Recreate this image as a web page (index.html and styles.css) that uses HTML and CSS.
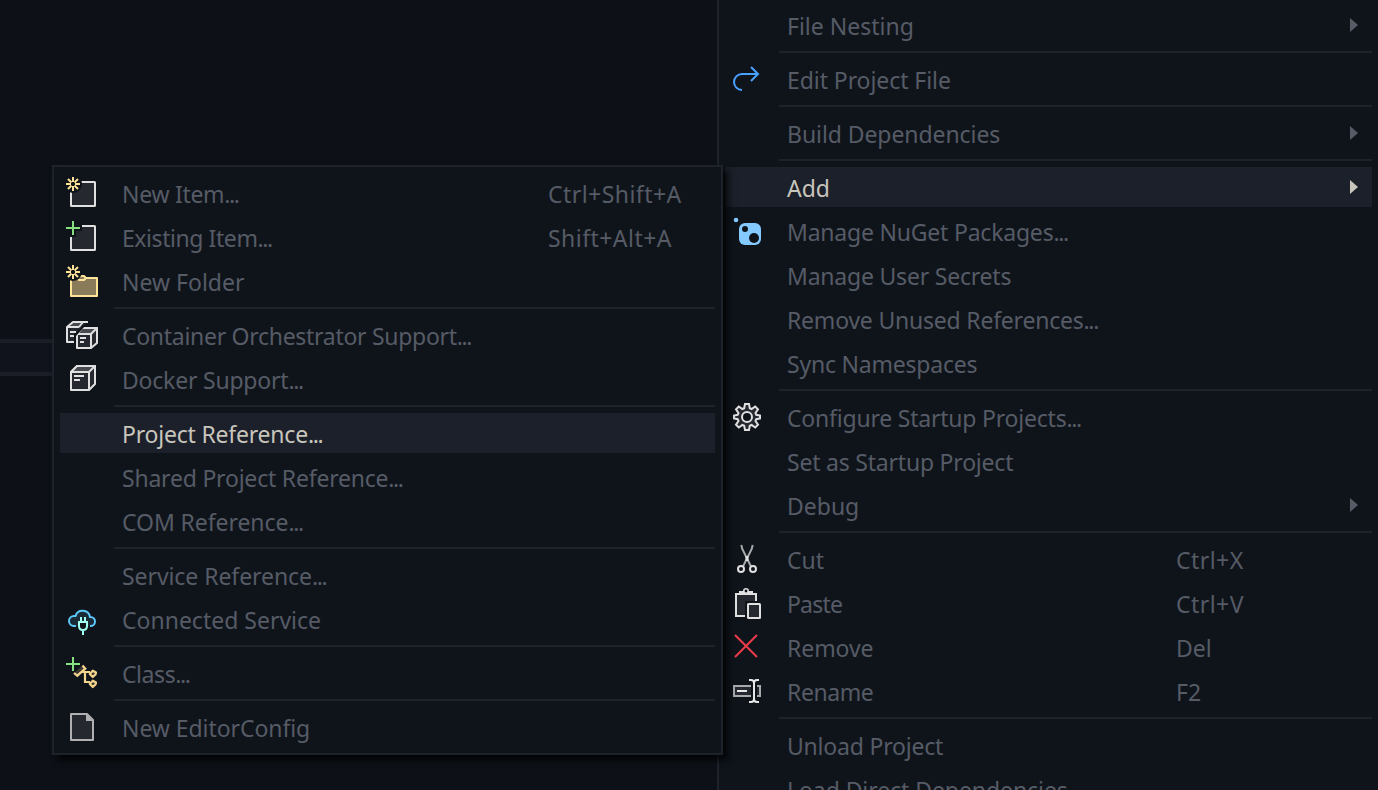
FILE: index.html
```
<!DOCTYPE html>
<html lang="en">
<head>
<meta charset="utf-8">
<title>Project menu</title>
<link rel="stylesheet" href="styles.css">
</head>
<body>
<div class="desktop">
  <div class="backdrop"><div class="strip"></div></div>

  <nav class="menu context">
    <div class="row"><span class="icon"></span><span class="label">File Nesting</span><span class="arrow"></span></div>
    <hr class="sep">
    <div class="row"><svg class="icon" viewBox="0 0 32 32"><path d="M20 4l7 7-7 7M27 11H11a8 8 0 0 0 0 16" fill="none" stroke="#4aa0ff" stroke-width="2"/></svg><span class="label t1">Edit Project File</span></div>
    <hr class="sep">
    <div class="row"><span class="icon"></span><span class="label t1">Build Dependencies</span><span class="arrow"></span></div>
    <hr class="sep">
    <div class="row active"><span class="icon"></span><span class="label">Add</span><span class="arrow"></span></div>
    <div class="row"><svg class="icon" viewBox="0 0 32 32"><circle cx="5" cy="5" r="2.3" fill="#84c9ff"/><rect x="8" y="8" width="22" height="22" rx="6" fill="#84c9ff"/><circle cx="14" cy="14" r="3" fill="#0f141b"/><circle cx="23" cy="23" r="5" fill="#0f141b"/></svg><span class="label t2">Manage NuGet Packages<i>...</i></span></div>
    <div class="row"><span class="icon"></span><span class="label t2">Manage User Secrets</span></div>
    <div class="row"><span class="icon"></span><span class="label t2">Remove Unused References<i>...</i></span></div>
    <div class="row"><span class="icon"></span><span class="label t2">Sync Namespaces</span></div>
    <hr class="sep">
    <div class="row"><svg class="icon" viewBox="0 0 32 32"><path d="M14 3h4l.8 4.200 1.800.8 3.600-2.500 2.800 2.800L24.500 12l.8 1.800 3.700.7v3l-3.700.7-.8 1.800 2.500 3.700-2.800 2.800-3.600-2.500-1.800.8L18 29h-4l-.8-4.200-1.800-.8-3.600 2.500L5 23.700 7.500 20l-.8-1.800L3 17.500v-3l3.700-.7.8-1.800L5 8.300l2.800-2.800L11.400 8l1.800-.8z" fill="#25282f" stroke="#e0e0e0" stroke-width="2"/><circle cx="16" cy="16" r="5" fill="#0f141b" stroke="#e0e0e0" stroke-width="2"/></svg><span class="label t2">Configure Startup Projects<i>...</i></span></div>
    <div class="row"><span class="icon"></span><span class="label t2">Set as Startup Project</span></div>
    <div class="row"><span class="icon"></span><span class="label">Debug</span><span class="arrow"></span></div>
    <hr class="sep">
    <div class="row"><svg class="icon" viewBox="0 0 32 32"><g fill="none" stroke-width="2"><path d="M10.300 2l1 4 8.700 17.500M21.700 2l-1 4L12 23.500" stroke="#a9aaac"/><path d="M16 13v5" stroke="#e0e0e0" stroke-width="3"/><circle cx="10" cy="26" r="3" stroke="#e0e0e0"/><circle cx="22" cy="26" r="3" stroke="#e0e0e0"/></g></svg><span class="label">Cut</span><span class="key">Ctrl+X</span></div>
    <div class="row"><svg class="icon" viewBox="0 0 32 32"><path d="M14 29H5V7h20v7" fill="#25282f"/><path d="M14 29H5V7h20v7" fill="none" stroke="#e0e0e0" stroke-width="2"/><path d="M15 32V15h16" fill="none" stroke="#0f141b" stroke-width="2"/><path d="M8 7V4h4a3 3 0 0 1 6 0h4v3z" fill="#e0e0e0"/><circle cx="15" cy="4" r="1.400" fill="#0f141b"/><rect x="17" y="17" width="12" height="14" rx=".5" fill="#25282f" stroke="#e0e0e0" stroke-width="2"/></svg><span class="label t8">Paste</span><span class="key">Ctrl+V</span></div>
    <div class="row"><svg class="icon" viewBox="0 0 32 32"><path d="M4 4l22 22M26 4L4 26" stroke="#f23c4c" stroke-width="1.900"/></svg><span class="label t1">Remove</span><span class="key plain">Del</span></div>
    <div class="row"><svg class="icon" viewBox="0 0 32 32"><path d="M20 11H3v10h17M26 11h3v10h-3" fill="#25282f" stroke="#a9aaac" stroke-width="2"/><path d="M6 16h10M23 6v20M18 5h2q3 0 3 3 0-3 3-3h2M18 27h2q3 0 3-3 0 3 3 3h2" fill="none" stroke="#e8e8e8" stroke-width="2"/></svg><span class="label t4">Rename</span><span class="key plain">F2</span></div>
    <hr class="sep">
    <div class="row"><span class="icon"></span><span class="label t2">Unload Project</span></div>
    <div class="row"><span class="icon"></span><span class="label t1">Load Direct Dependencies</span></div>
  </nav>

  <nav class="menu submenu">
    <div class="row"><svg class="icon" viewBox="0 0 32 32"><rect x="5" y="5" width="24" height="24" rx=".5" fill="#25282f" stroke="#e0e0e0" stroke-width="2"/><circle cx="7" cy="7" r="9" fill="#0f141b"/><path d="M7 0v5M7 9v5M0 7h5M9 7h5M2 2l3.500 3.500M8.500 8.500l3.500 3.500M12 2L8.500 5.500M5.500 8.500L2 12" stroke="#ffe399" stroke-width="2"/></svg><span class="label t3">New Item<i>...</i></span><span class="key">Ctrl+Shift+A</span></div>
    <div class="row"><svg class="icon" viewBox="0 0 32 32"><rect x="5" y="5" width="24" height="24" rx=".5" fill="#25282f" stroke="#e0e0e0" stroke-width="2"/><path d="M7 0v16M0 7h16" stroke="#0f141b" stroke-width="6"/><path d="M7 0v14M0 7h14" stroke="#85e07f" stroke-width="2"/></svg><span class="label t4">Existing Item<i>...</i></span><span class="key">Shift+Alt+A</span></div>
    <div class="row"><svg class="icon" viewBox="0 0 32 32"><path d="M5 13h7l2-2h4l2 2h11v18H5z" fill="#8a7c5a" stroke="#ffe399" stroke-width="2" stroke-linejoin="round"/><path d="M12 15h6l2-2" fill="none" stroke="#ffe399" stroke-width="2"/><circle cx="7" cy="7" r="9" fill="#0f141b"/><path d="M7 0v5M7 9v5M0 7h5M9 7h5M2 2l3.500 3.500M8.500 8.500l3.500 3.500M12 2L8.500 5.500M5.500 8.500L2 12" stroke="#ffe399" stroke-width="2"/></svg><span class="label">New Folder</span></div>
    <hr class="sep">
    <div class="row"><svg class="icon" viewBox="0 0 32 32"><g fill="#25282f" stroke="#e0e0e0" stroke-width="2" stroke-linejoin="round"><path d="M22 3H7L1 8v15h7V15l3-3 4-4z" stroke="none"/><path d="M7 3h9l-4 5H1z" fill="#484a50" stroke="none"/><path d="M22 3H7L1 8v15h7M1 8h12M13 8l4-5M4 13h6M4 17h4" fill="none"/><path d="M11 15l5-6h15v15l-6 5H11z"/><path d="M11 15l5-6h15l-6 6z" fill="#484a50"/><path d="M25 15v14M14 19h6M14 23h4"/></g><path d="M8.500 17l9-10" stroke="#0f141b" stroke-width="2.200"/></svg><span class="label t3">Container Orchestrator Support<i>...</i></span></div>
    <div class="row"><svg class="icon" viewBox="0 0 32 32"><g fill="#25282f" stroke="#e0e0e0" stroke-width="2" stroke-linejoin="round"><path d="M5 9l6-6h18v18l-6 6H5z"/><path d="M5 9l6-6h18l-6 6z" fill="#484a50"/><path d="M23 9v18M8 13h10M8 17h6"/></g></svg><span class="label t2">Docker Support<i>...</i></span></div>
    <hr class="sep">
    <div class="row active"><span class="icon"></span><span class="label t2">Project Reference<i>...</i></span></div>
    <div class="row"><span class="icon"></span><span class="label t2">Shared Project Reference<i>...</i></span></div>
    <div class="row"><span class="icon"></span><span class="label t1">COM Reference<i>...</i></span></div>
    <hr class="sep">
    <div class="row"><span class="icon"></span><span class="label t1">Service Reference<i>...</i></span></div>
    <div class="row"><svg class="icon" viewBox="0 0 32 32"><path d="M10 23H8a5 5 0 0 1 0-10h1.500a7.500 7.500 0 0 1 14.500 1h.5a4.500 4.500 0 0 1 0 9H24" fill="#1a2a36" stroke="#5cc8fa" stroke-width="2"/><path d="M13 19h8v4q0 4-4 4t-4-4zM12 19h10M15 14v5M19 14v5M17 27v5" fill="#0f141b" stroke="#a0fff0" stroke-width="2"/></svg><span class="label">Connected Service</span></div>
    <hr class="sep">
    <div class="row"><svg class="icon" viewBox="0 0 32 32"><path d="M8.500 15.500l8-7 3 3.500-8 7z" fill="#3c3830"/><path d="M8 16l3.300 2.700 8-7-2.800-3.200M15 15h9M19 15v10h5" fill="none" stroke="#f3d48c" stroke-width="2.200"/><path d="M23.800 17l3-3.300 3.200 1.800-.5 2-2.700 2.500zM23.800 27l3-3.300 3.200 1.800-.5 2-2.700 2.500z" fill="#3c3830" stroke="#f3d48c" stroke-width="2.200" stroke-linejoin="round"/><path d="M7 0v14M0 7h14" stroke="#85e07f" stroke-width="2"/></svg><span class="label t4">Class<i>...</i></span></div>
    <hr class="sep">
    <div class="row"><svg class="icon" viewBox="0 0 32 32"><path d="M5 3h16l6 6v20H5z" fill="#25282f" stroke="#b0b0b2" stroke-width="2" stroke-linejoin="round"/><path d="M20 3v7h7z" fill="#b0b0b2"/></svg><span class="label t1">New EditorConfig</span></div>
  </nav>
</div>
</body>
</html>
```
FILE: styles.css
```
* { box-sizing: border-box; }
body { margin: 0; }
.desktop {
  position: relative;
  display: flex;
  width: 1378px;
  height: 790px;
  overflow: hidden;
  background: #0d1017;
  color: #565b66;
  font: 23px/40px "Noto Sans", "Open Sans", sans-serif;
}
.backdrop { width: 717px; padding-top: 339px; }
.strip {
  height: 37px;
  border: solid #1b1e26;
  border-width: 4px 0;
  background: #10131b;
}
.menu { display: flex; flex-direction: column; background: #0f141b; }
.context {
  width: 661px;
  border-left: 2px solid #1e222a;
  padding: 3px 6px 0;
}
/* The submenu flyout covers the window and the edge of its parent menu. */
.submenu {
  position: absolute;
  left: 52px;
  top: 165px;
  width: 671px;
  height: 590px;
  padding: 4px 6px;
  border: 2px solid #1e222a;
  box-shadow: 5px 5px 7px rgba(0, 0, 0, .8);
}
.row {
  display: flex;
  flex: none;
  align-items: center;
  height: 44px;
  padding-left: 6px;
  border: solid transparent;
  border-width: 2px 0;
  background-clip: padding-box;
  white-space: nowrap;
}
.active { background-color: #1c202a; color: #c8c5bc; }
.icon { flex: none; width: 32px; height: 32px; margin-right: 24px; }
.label { flex: 1; padding-top: 1px; }
.label i { font-style: normal; letter-spacing: -1.4px; }
/* Tracking steps for labels */
.t1 { letter-spacing: -.07px; }
.t2 { letter-spacing: -.21px; }
.t3 { letter-spacing: -.29px; }
.t4 { letter-spacing: -.43px; }
.t8 { letter-spacing: -.8px; }
.key { width: 167px; padding-top: 1px; letter-spacing: .45px; }
.plain { letter-spacing: 0; }
.context .key { width: 196px; }
.arrow {
  width: 8px;
  height: 14px;
  margin-right: 14px;
  background: currentColor;
  clip-path: polygon(0 0, 100% 50%, 0 100%);
}
.sep {
  flex: none;
  height: 2px;
  margin: 4px 0 4px 54px;
  border: 0;
  background: #1e222a;
}
```
